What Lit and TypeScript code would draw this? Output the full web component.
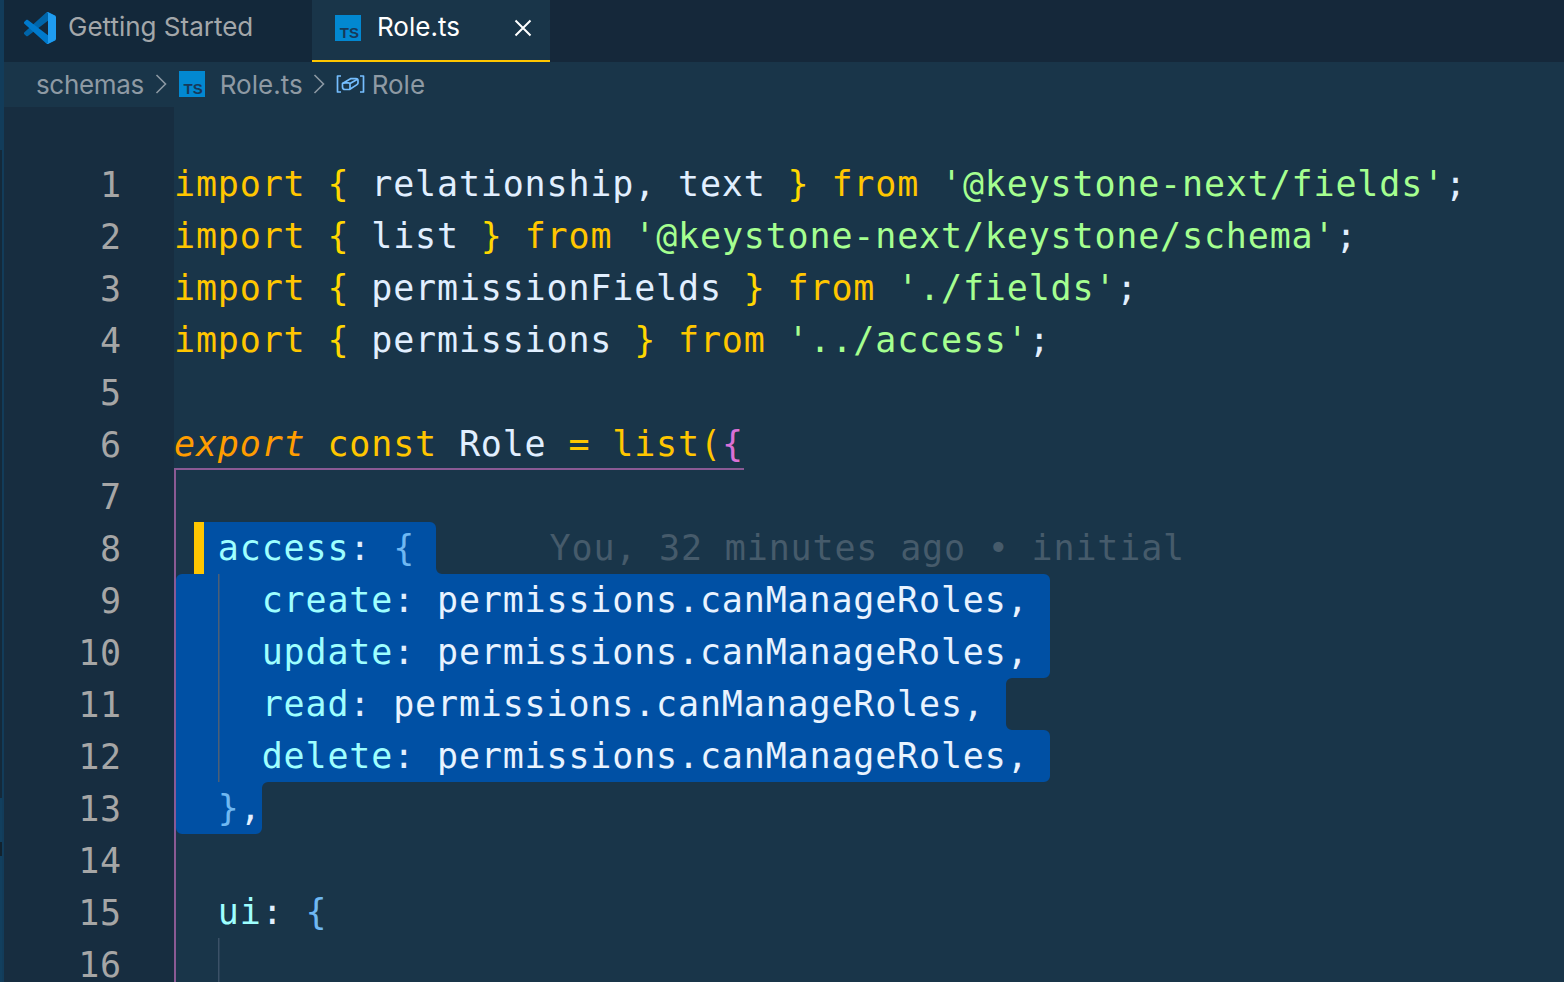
import { LitElement, html, css, svg } from "lit";
import { customElement } from "lit/decorators.js";

type Seg = [string, string];
const K = "kw", B = "br", P = "pl", S = "str", U = "pu", O = "prop", L = "bl", I = "it", G = "pk", M = "sp";
const lines: Seg[][] = [
  [[K, "import"], [P, " "], [B, "{"], [P, " relationship, text "], [B, "}"], [P, " "], [K, "from"], [P, " "], [S, "'@keystone-next/fields'"], [U, ";"]],
  [[K, "import"], [P, " "], [B, "{"], [P, " list "], [B, "}"], [P, " "], [K, "from"], [P, " "], [S, "'@keystone-next/keystone/schema'"], [U, ";"]],
  [[K, "import"], [P, " "], [B, "{"], [P, " permissionFields "], [B, "}"], [P, " "], [K, "from"], [P, " "], [S, "'./fields'"], [U, ";"]],
  [[K, "import"], [P, " "], [B, "{"], [P, " permissions "], [B, "}"], [P, " "], [K, "from"], [P, " "], [S, "'../access'"], [U, ";"]],
  [],
  [[I, "export"], [P, " "], [K, "const"], [P, " Role "], [K, "="], [P, " "], [K, "list"], [K, "("], [G, "{"]],
  [],
  [[P, "  "], [O, "access"], [U, ":"], [P, " "], [L, "{"], [M, "      "], ["blame", "You, 32 minutes ago • initial"]],
  [[P, "    "], [O, "create"], [U, ":"], [M, " permissions.canManageRoles,"]],
  [[P, "    "], [O, "update"], [U, ":"], [M, " permissions.canManageRoles,"]],
  [[P, "    "], [O, "read"], [U, ":"], [M, " permissions.canManageRoles,"]],
  [[P, "    "], [O, "delete"], [U, ":"], [M, " permissions.canManageRoles,"]],
  [[P, "  "], [L, "}"], [U, ","]],
  [],
  [[P, "  "], [O, "ui"], [U, ":"], [P, " "], [L, "{"]],
  [],
];

const tsIcon = () => html`<span class="ts"><span>TS</span></span>`;

const chevron = (cls: string) => html`<svg class="chev ${cls}" viewBox="0 0 12 20" width="12" height="20"><path d="M1.5 1 L10.5 10 L1.5 19" fill="none" stroke="#8b98a3" stroke-width="1.6"/></svg>`;

const selection =
  "M210 522 H430 a6 6 0 0 1 6 6 V568 a6 6 0 0 0 6 6 H1044 a6 6 0 0 1 6 6 V672 a6 6 0 0 1 -6 6 H1012 a6 6 0 0 0 -6 6 V724 a6 6 0 0 0 6 6 H1044 a6 6 0 0 1 6 6 V776 a6 6 0 0 1 -6 6 H268 a6 6 0 0 0 -6 6 V828 a6 6 0 0 1 -6 6 H182 a6 6 0 0 1 -6 -6 V580 a6 6 0 0 1 6 -6 H204 V522 Z";

@customElement("app-root")
export class AppRoot extends LitElement {
  static styles = css`
    :host { display: flex; width: 1564px; height: 982px; overflow: hidden; background: #193549; }
    .strip {
      width: 4px; flex: none; background-color: #123c5a;
      background-image: linear-gradient(to bottom, #123c5a 0 150px, #14293a 150px 798px, #123f5e 798px 842px, #12222e 842px 856px, #123f5e 856px);
      background-size: 2px 100%; background-repeat: no-repeat;
    }
    .main { flex: 1; min-width: 0; }
    .tabbar { display: flex; height: 62px; background: #15283a; box-sizing: border-box; }
    .tab { display: flex; align-items: center; box-sizing: border-box; height: 62px; font: 26px Inter, "Liberation Sans", sans-serif; }
    .tab.a { width: 308px; background: #13283a; color: #a3a7aa; padding: 0 0 10px 20px; }
    .tab.a svg { margin: 4px 12px 0 0; }
    .tab.b { width: 238px; background: #193549; color: #fff; padding: 0 0 8px 23px; border-bottom: 2px solid #ffc600; }
    .tab.b .name { margin-left: 16px; flex: 1; }
    .tab.b .x { margin: 4px 18px 0 0; }
    .tab.b .ts { margin-top: 4px; }
    .ts { display: inline-block; width: 26px; height: 26px; background: #0288d1; position: relative; flex: none; }
    .ts span { position: absolute; right: 2px; bottom: 2px; font: bold 15px/12px "Liberation Sans", sans-serif; color: #17395a; }
    .crumbs { display: flex; align-items: center; height: 45px; box-sizing: border-box; padding: 0 0 1px 32px; color: #8e9aa4; font: 26px Inter, "Liberation Sans", sans-serif; background: #193549; }
    .crumbs .sch { letter-spacing: -0.35px; }
    .crumbs .chev { margin: 0 12px 0 11px; }
    .crumbs .ts { margin-right: 15px; }
    .crumbs .chev.c2 { margin: 0 11px 0 10px; }
    .crumbs .sym { margin-right: 7px; }
    .editor { display: flex; height: 875px; overflow: hidden; }
    .gutter { width: 170px; flex: none; background: #172d40; box-sizing: border-box; padding: 52px 52px 0 0; text-align: right; color: #a6a6a6; }
    .gutter div, .line { height: 52px; font: 35px/52px "DejaVu Sans Mono", monospace; letter-spacing: 0.84px; }
    .code { position: relative; flex: 1; padding: 51px 0 0 0; }
    .deco { position: absolute; left: 0; top: 0; }
    .line { position: relative; white-space: pre; color: #e1efff; }
    .kw { color: #ffc600; }
    .it { color: #ff9d00; font-style: italic; }
    .br { color: #ffd700; }
    .pk { color: #da70d6; }
    .bl { color: #6fb8f2; }
    .pl { color: #e1efff; }
    .str { color: #a5ff90; }
    .pu { color: #e1efff; }
    .prop { color: #9effff; }
    .sp { color: #e8f3ff; }
    .blame { color: #465b6b; margin-left: 3px; }
  `;

  render() {
    return html`
      <div class="strip"></div>
      <div class="main">
        <div class="tabbar">
          <div class="tab a">
            <svg width="32" height="32" viewBox="0 0 100 100">
              <path fill="#0065A9" d="M96.4614 10.7962L75.8569 0.875542C73.4719 -0.272773 70.6217 0.211611 68.75 2.08333L1.29858 63.5832C-0.515693 65.2373 -0.513607 68.0937 1.30308 69.7452L6.81272 74.754C8.29793 76.1042 10.5347 76.2036 12.1338 74.9905L93.3609 13.3699C96.086 11.3026 100 13.2462 100 16.6667V16.4275C100 14.0265 98.6246 11.8378 96.4614 10.7962Z"/>
              <path fill="#007ACC" d="M96.4614 89.2038L75.8569 99.1245C73.4719 100.273 70.6217 99.7884 68.75 97.9167L1.29858 36.4169C-0.515693 34.7627 -0.513607 31.9063 1.30308 30.2548L6.81272 25.246C8.29793 23.8958 10.5347 23.7964 12.1338 25.0095L93.3609 86.6301C96.086 88.6974 100 86.7538 100 83.3334V83.5726C100 85.9735 98.6246 88.1622 96.4614 89.2038Z"/>
              <path fill="#1F9CF0" d="M75.8578 99.1263C73.4721 100.274 70.6219 99.7885 68.75 97.9166C71.0564 100.223 75 98.5895 75 95.3278V4.67213C75 1.41039 71.0564 -0.223106 68.75 2.08329C70.6219 0.211402 73.4721 -0.273666 75.8578 0.873633L96.4587 10.7807C98.6234 11.8217 100 14.0112 100 16.4132V83.5871C100 85.9891 98.6234 88.1786 96.4586 89.2196L75.8578 99.1263Z"/>
            </svg>
            Getting Started
          </div>
          <div class="tab b">
            ${tsIcon()}
            <span class="name">Role.ts</span>
            <svg class="x" width="18" height="18" viewBox="0 0 18 18"><path d="M1.5 1.5 L16.5 16.5 M16.5 1.5 L1.5 16.5" stroke="#fff" stroke-width="2"/></svg>
          </div>
        </div>
        <div class="crumbs">
          <span class="sch">schemas</span>
          ${chevron("")}
          ${tsIcon()}
          <span>Role.ts</span>
          ${chevron("c2")}
          <svg class="sym" width="29" height="18" viewBox="0 0 29 18" fill="none" stroke="#75beff" stroke-width="1.7" stroke-linejoin="round">
            <path d="M5 1 H1.5 V17 H5 M24 1 H27.5 V17 H24"/>
            <path d="M6.5 8.5 L14.5 3.7 H20 Q22 3.7 22 5.7 V8 Q22 9 21 9.6 L13.5 14.5 H9 Q6.5 14.5 6.5 12 Z"/>
            <path d="M6.8 8.5 Q7.4 7.8 9 7.8 H12.5 Q14 7.8 14 9.3 V14 M14 8.4 L21.5 4.2"/>
          </svg>
          <span>Role</span>
        </div>
        <div class="editor">
          <div class="gutter">${lines.map((_, i) => html`<div>${i + 1}</div>`)}</div>
          <div class="code">
            <svg class="deco" width="1390" height="875" viewBox="174 107 1390 875">
              ${svg`
                <path d=${selection} fill="#0050a4"/>
                <rect x="194" y="522" width="10" height="52" fill="#ffc600"/>
                <rect x="218" y="574" width="1.5" height="208" fill="#4d5f75"/>
                <rect x="218" y="938" width="1.5" height="52" fill="#3b5167"/>
                <path d="M744 469 H175 V990" fill="none" stroke="#8a5a94" stroke-width="2"/>
              `}
            </svg>
            ${lines.map(
              (l) => html`<div class="line">${l.map(([c, t]) => html`<span class=${c}>${t}</span>`)}</div>`
            )}
          </div>
        </div>
      </div>
    `;
  }
}
